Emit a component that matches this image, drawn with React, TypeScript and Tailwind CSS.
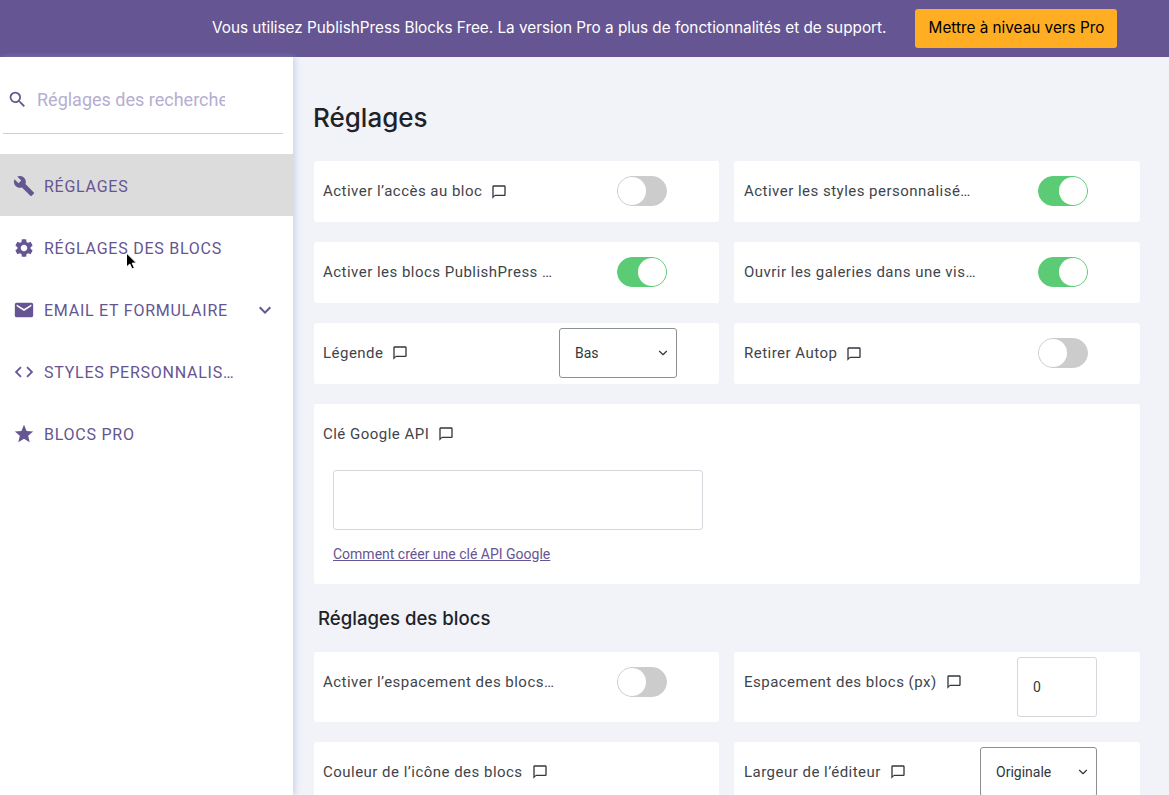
import { ChevronDown } from "lucide-react";
import { MdBuild, MdChatBubbleOutline, MdCode, MdEmail, MdExpandMore, MdSearch, MdSettings, MdStar } from "react-icons/md";

const navItems = [
  { label: "RÉGLAGES", icon: MdBuild, active: true },
  { label: "RÉGLAGES DES BLOCS", icon: MdSettings },
  { label: "EMAIL ET FORMULAIRE", icon: MdEmail, expand: true },
  { label: "STYLES PERSONNALISÉS", icon: MdCode },
  { label: "BLOCS PRO", icon: MdStar },
];

function Toggle({ on }: { on?: boolean }) {
  return (
    <div
      className={`flex h-[30px] w-[50px] shrink-0 rounded-full border ${
        on ? "justify-end border-[#5bcc75] bg-[#5bcc75]" : "justify-start border-[#cccccc] bg-[#cccccc]"
      }`}
    >
      <div className="h-[28px] w-[28px] rounded-full bg-white" />
    </div>
  );
}

function Label({ text, hint, width }: { text: string; hint?: boolean; width?: string }) {
  return (
    <div className="flex items-center">
      <span className={`truncate text-[15px] tracking-[0.48px] text-[#3f444b] ${width ?? ""}`}>{text}</span>
      {hint && <MdChatBubbleOutline className="ml-[9px] h-[16px] w-[16px] shrink-0 text-[#33383e]" />}
    </div>
  );
}

function SelectBox({ value, className }: { value: string; className: string }) {
  return (
    <div className={`flex items-center justify-between rounded-[3px] border border-[#8c8f94] pl-[15px] pr-[6px] text-[14px] text-[#32373c] ${className}`}>
      <span>{value}</span>
      <ChevronDown className="h-[14px] w-[14px]" strokeWidth={2} />
    </div>
  );
}

function ToggleRow({ text, hint, on, width, tall, right }: { text: string; hint?: boolean; on?: boolean; width?: string; tall?: boolean; right?: boolean }) {
  return (
    <div className={`relative flex rounded-[3px] bg-white ${right ? "pl-[10px]" : "pl-[9px]"} ${tall ? "h-[70px] items-start pt-[19px]" : "h-[61px] items-center"}`}>
      <Label text={text} hint={hint} width={width} />
      <div className={`absolute top-[15px] ${right ? "left-[304px]" : "left-[303px]"}`}>
        <Toggle on={on} />
      </div>
    </div>
  );
}

export default function App() {
  return (
    <div className="relative flex h-[795px] flex-col overflow-hidden font-['Roboto',sans-serif]">
      <div className="flex h-[57px] shrink-0 items-center bg-[#655592] pl-[212px]">
        <span className="font-['Inter',sans-serif] text-[15.3px] text-white">
          Vous utilisez PublishPress Blocks Free. La version Pro a plus de fonctionnalités et de support.
        </span>
        <button className="ml-[29px] h-[39px] w-[202px] rounded-[3px] bg-[#ffae23] font-['Inter',sans-serif] text-[15.3px] text-black">
          Mettre à niveau vers Pro
        </button>
      </div>

      <div className="flex min-h-0 flex-1 bg-[#f1f3f9]">
        <aside className="w-[293px] shrink-0 bg-white shadow-[2px_0_6px_rgba(160,170,210,0.45)]">
          <div className="mx-[3px] flex h-[77px] w-[280px] items-center border-b border-[#cfcfcf] pl-[4px] pt-[9px]">
            <MdSearch className="h-[21px] w-[21px] shrink-0 text-[#655592]" />
            <span className="ml-[9px] w-[188px] overflow-hidden whitespace-nowrap text-[18px] text-[#b5aed0]">
              Réglages des recherches
            </span>
          </div>
          <nav className="mt-[20px]">
            {navItems.map((item) => (
              <div
                key={item.label}
                className={`flex h-[62px] items-center pl-[13px] pt-[2px] text-[#655592] ${item.active ? "bg-[#dcdcdc]" : ""}`}
              >
                <item.icon className="h-[22px] w-[22px] shrink-0" />
                <span className="ml-[9px] w-[192px] truncate pt-[2px] text-[16px] tracking-[0.75px]">{item.label}</span>
                {item.expand && <MdExpandMore className="ml-[17px] h-[24px] w-[24px] shrink-0" />}
              </div>
            ))}
          </nav>
        </aside>

        <main className="flex-1 pl-[21px] pr-[29px]">
          <h1 className="-ml-[1px] mt-[42px] font-['Inter',sans-serif] text-[26px] leading-[38px] font-medium text-[#1f2328]">Réglages</h1>

          <div className="mt-[24px] grid grid-cols-[405px_406px] gap-x-[15px] gap-y-[20px]">
            <ToggleRow text="Activer l’accès au bloc" hint />
            <ToggleRow text="Activer les styles personnalisés des blocs" on right width="w-[230px]" />
            <ToggleRow text="Activer les blocs PublishPress Blocks" on width="w-[231px]" />
            <ToggleRow text="Ouvrir les galeries dans une visionneuse" on right width="w-[234px]" />
            <div className="flex h-[61px] items-start justify-between rounded-[3px] bg-white pl-[9px] pr-[42px] pt-[5px]">
              <div className="pt-[14px]">
                <Label text="Légende" hint />
              </div>
              <SelectBox value="Bas" className="h-[50px] w-[118px]" />
            </div>
            <ToggleRow text="Retirer Autop" hint right />

            <div className="col-span-2 h-[180px] rounded-[3px] bg-white pl-[9px] pt-[19px]">
              <Label text="Clé Google API" hint />
              <div className="ml-[10px] mt-[24px] h-[60px] w-[370px] rounded-[3px] border border-[#d6d6dc] bg-white" />
              <a className="ml-[10px] mt-[16px] block text-[14px] leading-[16px] text-[#655592] underline">
                Comment créer une clé API Google
              </a>
            </div>
          </div>

          <h2 className="ml-[4px] mt-[21px] font-['Inter',sans-serif] text-[18.6px] leading-[26px] font-medium text-[#1f2328]">Réglages des blocs</h2>

          <div className="mt-[21px] grid grid-cols-[405px_406px] gap-x-[15px] gap-y-[20px]">
            <ToggleRow text="Activer l’espacement des blocs par défaut" width="w-[232px]" tall />
            <div className="flex h-[70px] justify-between rounded-[3px] bg-white pl-[10px] pr-[43px] pt-[5px]">
              <div className="pt-[14px]">
                <Label text="Espacement des blocs (px)" hint />
              </div>
              <div className="flex h-[60px] w-[80px] items-center rounded-[3px] border border-[#d6d6dc] pl-[15px] text-[14px] text-[#32373c]">0</div>
            </div>
            <div className="flex h-[70px] items-start rounded-[3px] bg-white pl-[9px] pt-[19px]">
              <Label text="Couleur de l’icône des blocs" hint />
            </div>
            <div className="flex h-[70px] justify-between rounded-[3px] bg-white pl-[10px] pr-[43px] pt-[5px]">
              <div className="pt-[14px]">
                <Label text="Largeur de l’éditeur" hint />
              </div>
              <SelectBox value="Originale" className="h-[50px] w-[117px]" />
            </div>
          </div>
        </main>
      </div>

      {/* mouse pointer caught in the capture */}
      <svg className="absolute left-[125px] top-[252px]" width="13" height="19" viewBox="0 0 13 19">
        <path d="M1.5 1v14l3.3-3 2.2 5 2.4-1-2.2-4.9h4.3z" fill="#000" stroke="#fff" strokeWidth="1" />
      </svg>
    </div>
  );
}
